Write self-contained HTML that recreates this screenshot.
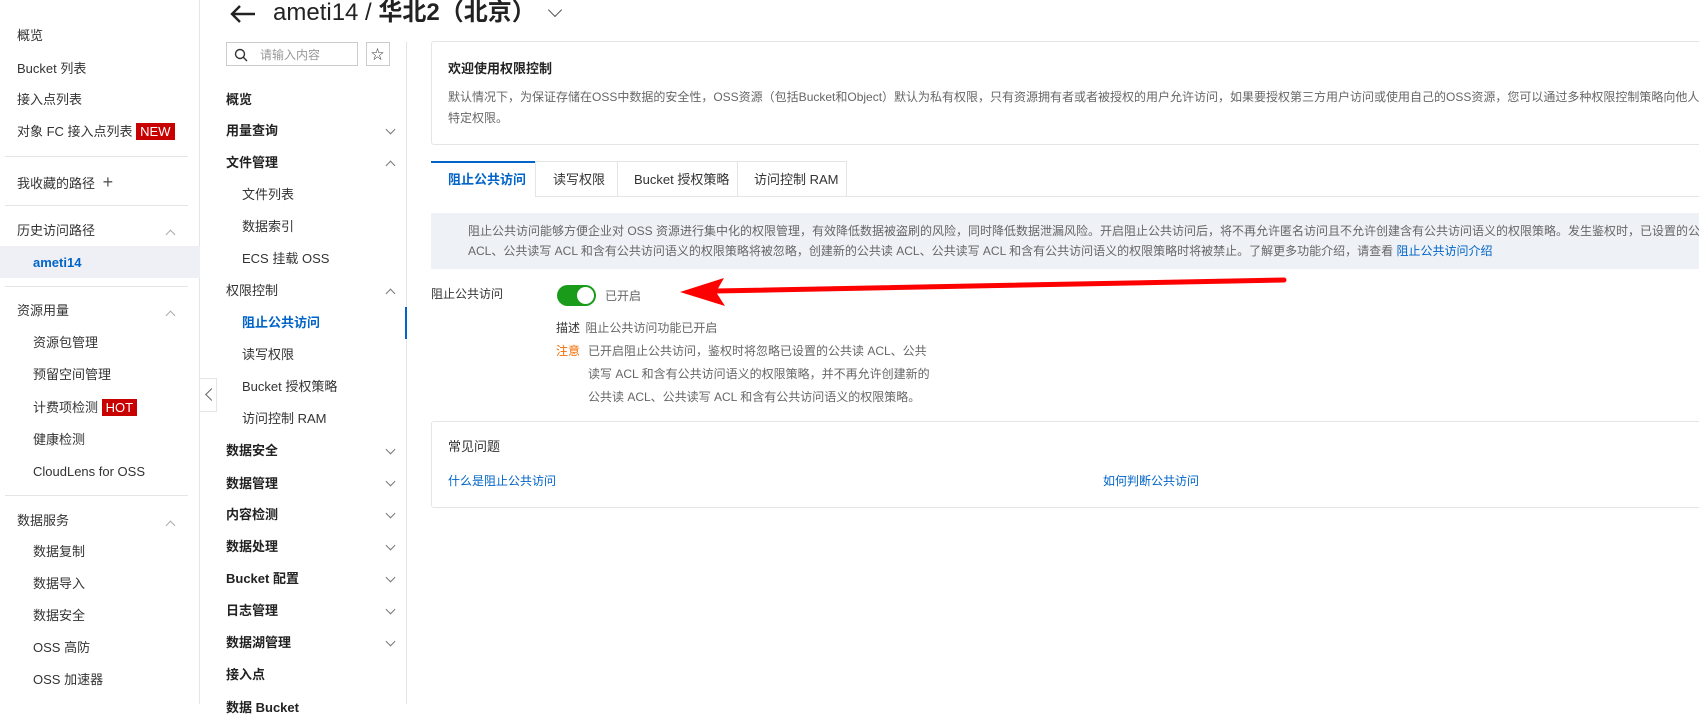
<!DOCTYPE html>
<html><head><meta charset="utf-8"><style>
*{margin:0;padding:0;box-sizing:border-box}
body{width:1699px;height:704px;overflow:hidden;background:#fff;font-family:"Liberation Sans","Noto Sans CJK SC",sans-serif;font-size:13px;color:#333;position:relative}
.a{position:absolute;white-space:nowrap}
.t{line-height:16px;transform:translateY(-8px)}
.hr{position:absolute;height:1px;background:#e3e5e8}
.chev{position:absolute;width:7px;height:7px;border-right:1.3px solid #777;border-bottom:1.3px solid #777}
.dn{transform:rotate(45deg)}
.up{transform:rotate(-135deg)}
.b{font-weight:bold;color:#222}
.badge{background:#c80000;color:#fff;padding:1px 4px;font-size:13px}
.gray{color:#666}
.link{color:#0064c8}
</style></head><body>
<!-- left sidebar -->
<div class="a" style="left:0;top:0;width:200px;height:704px;border-right:1px solid #e3e5e8"></div>
<div class="a" style="left:0;top:246px;width:200px;height:32px;background:#eef0f5"></div>
<div class="a t" style="left:17px;top:36px">概览</div>
<div class="a t" style="left:17px;top:69px">Bucket 列表</div>
<div class="a t" style="left:17px;top:100px">接入点列表</div>
<div class="a t" style="left:17px;top:132px">对象 FC 接入点列表 <span class="badge">NEW</span></div>
<div class="hr" style="left:5px;width:183px;top:156px"></div>
<div class="a t" style="left:17px;top:182px">我收藏的路径 <span style="font-size:18px;margin-left:4px;color:#555">+</span></div>
<div class="hr" style="left:5px;width:183px;top:205px"></div>
<div class="a t" style="left:17px;top:231px">历史访问路径</div>
<div class="chev up" style="left:167px;top:231px;border-color:#aaa"></div>
<div class="a t" style="left:33px;top:263px;color:#0064c8;font-weight:bold">ameti14</div>
<div class="hr" style="left:5px;width:183px;top:286px"></div>
<div class="a t" style="left:17px;top:311px">资源用量</div>
<div class="chev up" style="left:167px;top:312px;border-color:#aaa"></div>
<div class="a t" style="left:33px;top:343px">资源包管理</div>
<div class="a t" style="left:33px;top:375px">预留空间管理</div>
<div class="a t" style="left:33px;top:408px">计费项检测 <span class="badge">HOT</span></div>
<div class="a t" style="left:33px;top:440px">健康检测</div>
<div class="a t" style="left:33px;top:472px">CloudLens for OSS</div>
<div class="hr" style="left:5px;width:183px;top:495px"></div>
<div class="a t" style="left:17px;top:521px">数据服务</div>
<div class="chev up" style="left:167px;top:522px;border-color:#aaa"></div>
<div class="a t" style="left:33px;top:552px">数据复制</div>
<div class="a t" style="left:33px;top:584px">数据导入</div>
<div class="a t" style="left:33px;top:616px">数据安全</div>
<div class="a t" style="left:33px;top:648px">OSS 高防</div>
<div class="a t" style="left:33px;top:680px">OSS 加速器</div>

<!-- second nav -->
<div class="a" style="left:406px;top:42px;width:1px;height:662px;background:#e3e5e8"></div>
<div class="a" style="left:200px;top:378px;width:17px;height:34px;border:1px solid #e3e5e8;border-left:none;background:#fff"></div>
<div class="chev" style="left:207px;top:390px;width:9px;height:9px;transform:rotate(135deg);border-color:#666"></div>
<div class="a" style="left:226px;top:42px;width:132px;height:24px;border:1px solid #ccc"></div>
<svg class="a" style="left:234px;top:48px" width="14" height="14" viewBox="0 0 14 14"><circle cx="6" cy="6" r="4.5" fill="none" stroke="#333" stroke-width="1.4"/><line x1="9.3" y1="9.3" x2="13" y2="13" stroke="#333" stroke-width="1.4"/></svg>
<div class="a t" style="left:260px;top:55px;color:#999;font-size:12px">请输入内容</div>
<div class="a" style="left:366px;top:42px;width:24px;height:24px;border:1px solid #ccc"></div>
<div class="a t" style="left:371px;top:55px;font-size:13px;color:#333">☆</div>
<div class="a t b" style="left:226px;top:100px">概览</div>
<div class="a t b" style="left:226px;top:131px">用量查询</div><div class="chev dn" style="left:387px;top:126px"></div>
<div class="a t b" style="left:226px;top:163px">文件管理</div><div class="chev up" style="left:387px;top:162px"></div>
<div class="a t" style="left:242px;top:195px">文件列表</div>
<div class="a t" style="left:242px;top:227px">数据索引</div>
<div class="a t" style="left:242px;top:259px">ECS 挂载 OSS</div>
<div class="a t" style="left:226px;top:291px">权限控制</div><div class="chev up" style="left:387px;top:290px"></div>
<div class="a t" style="left:242px;top:323px;color:#0064c8;font-weight:bold">阻止公共访问</div>
<div class="a" style="left:405px;top:307px;width:2px;height:32px;background:#0064c8"></div>
<div class="a t" style="left:242px;top:355px">读写权限</div>
<div class="a t" style="left:242px;top:387px">Bucket 授权策略</div>
<div class="a t" style="left:242px;top:419px">访问控制 RAM</div>
<div class="a t b" style="left:226px;top:451px">数据安全</div><div class="chev dn" style="left:387px;top:446px"></div>
<div class="a t b" style="left:226px;top:484px">数据管理</div><div class="chev dn" style="left:387px;top:478px"></div>
<div class="a t b" style="left:226px;top:515px">内容检测</div><div class="chev dn" style="left:387px;top:510px"></div>
<div class="a t b" style="left:226px;top:547px">数据处理</div><div class="chev dn" style="left:387px;top:542px"></div>
<div class="a t b" style="left:226px;top:579px">Bucket 配置</div><div class="chev dn" style="left:387px;top:574px"></div>
<div class="a t b" style="left:226px;top:611px">日志管理</div><div class="chev dn" style="left:387px;top:606px"></div>
<div class="a t b" style="left:226px;top:643px">数据湖管理</div><div class="chev dn" style="left:387px;top:638px"></div>
<div class="a t b" style="left:226px;top:675px">接入点</div>
<div class="a t b" style="left:226px;top:708px">数据 Bucket</div>

<!-- header -->
<svg class="a" style="left:229px;top:4px" width="28" height="20" viewBox="0 0 28 20"><path d="M26 10H3M11 2L3 10l8 8" fill="none" stroke="#222" stroke-width="2.4"/></svg>
<div class="a" style="left:273px;top:-2px;font-size:24px;line-height:30px;color:#222;font-weight:500">ameti14 / <b>华北2（北京）</b></div>
<div class="chev dn" style="left:550px;top:5px;width:10px;height:10px;border-color:#555"></div>

<!-- content -->
<div class="a" style="left:431px;top:41px;width:1300px;height:104px;border:1px solid #e3e5e8;border-radius:3px"></div>
<div class="a t b" style="left:448px;top:69px">欢迎使用权限控制</div>
<div class="a t gray" style="left:448px;top:97px;font-size:12px">默认情况下，为保证存储在OSS中数据的安全性，OSS资源（包括Bucket和Object）默认为私有权限，只有资源拥有者或者被授权的用户允许访问，如果要授权第三方用户访问或使用自己的OSS资源，您可以通过多种权限控制策略向他人授予特定权限。</div>
<div class="a t gray" style="left:448px;top:118px;font-size:12px">特定权限。</div>

<div class="a" style="left:431px;top:196px;width:1300px;height:1px;background:#e3e5e8"></div>
<div class="a" style="left:431px;top:161px;width:416px;height:36px;border:1px solid #e3e5e8;border-bottom:none"></div>
<div class="a" style="left:431px;top:161px;width:104px;height:36px;border-top:2px solid #0064c8;background:#fff"></div>
<div class="a" style="left:535px;top:161px;width:1px;height:35px;background:#e3e5e8"></div>
<div class="a" style="left:617px;top:161px;width:1px;height:35px;background:#e3e5e8"></div>
<div class="a" style="left:737px;top:161px;width:1px;height:35px;background:#e3e5e8"></div>
<div class="a t" style="left:448px;top:180px;color:#0064c8;font-weight:bold;font-size:13px">阻止公共访问</div>
<div class="a t" style="left:553px;top:180px;font-size:13px">读写权限</div>
<div class="a t" style="left:634px;top:180px;font-size:13px">Bucket 授权策略</div>
<div class="a t" style="left:754px;top:180px;font-size:13px">访问控制 RAM</div>

<div class="a" style="left:431px;top:213px;width:1300px;height:56px;background:#eef1f6"></div>
<div class="a t gray" style="left:468px;top:231px;font-size:12px">阻止公共访问能够方便企业对 OSS 资源进行集中化的权限管理，有效降低数据被盗刷的风险，同时降低数据泄漏风险。开启阻止公共访问后，将不再允许匿名访问且不允许创建含有公共访问语义的权限策略。发生鉴权时，已设置的公共读</div>
<div class="a t gray" style="left:468px;top:251px;font-size:12px">ACL、公共读写 ACL 和含有公共访问语义的权限策略将被忽略，创建新的公共读 ACL、公共读写 ACL 和含有公共访问语义的权限策略时将被禁止。了解更多功能介绍，请查看 <span class="link">阻止公共访问介绍</span></div>

<div class="a t" style="left:431px;top:294px;font-size:12px;color:#333">阻止公共访问</div>
<div class="a" style="left:557px;top:285px;width:39px;height:21px;border-radius:11px;background:#1a9b1a"></div>
<div class="a" style="left:577px;top:287px;width:17px;height:17px;border-radius:9px;background:#fff"></div>
<div class="a t gray" style="left:605px;top:296px;font-size:12px">已开启</div>
<div class="a t" style="left:556px;top:328px;font-size:12px;color:#333">描述 <span class="gray" style="margin-left:2px">阻止公共访问功能已开启</span></div>
<div class="a t" style="left:556px;top:351px;font-size:12px;color:#f56c00">注意</div>
<div class="a t gray" style="left:588px;top:351px;font-size:12px">已开启阻止公共访问，鉴权时将忽略已设置的公共读 ACL、公共</div>
<div class="a t gray" style="left:588px;top:374px;font-size:12px">读写 ACL 和含有公共访问语义的权限策略，并不再允许创建新的</div>
<div class="a t gray" style="left:588px;top:397px;font-size:12px">公共读 ACL、公共读写 ACL 和含有公共访问语义的权限策略。</div>

<div class="a" style="left:431px;top:421px;width:1300px;height:87px;border:1px solid #e3e5e8;border-radius:3px"></div>
<div class="a t" style="left:448px;top:447px;color:#333">常见问题</div>
<div class="a t link" style="left:448px;top:481px;font-size:12px">什么是阻止公共访问</div>
<div class="a t link" style="left:1103px;top:481px;font-size:12px">如何判断公共访问</div>

<!-- red arrow -->
<svg class="a" style="left:0;top:0" width="1699" height="704"><path d="M1284 280 L715 291" stroke="#f00" stroke-width="5" stroke-linecap="round"/><path d="M680 292 L724 278 L716 292 L725 306 Z" fill="#f00"/></svg>
</body></html>
